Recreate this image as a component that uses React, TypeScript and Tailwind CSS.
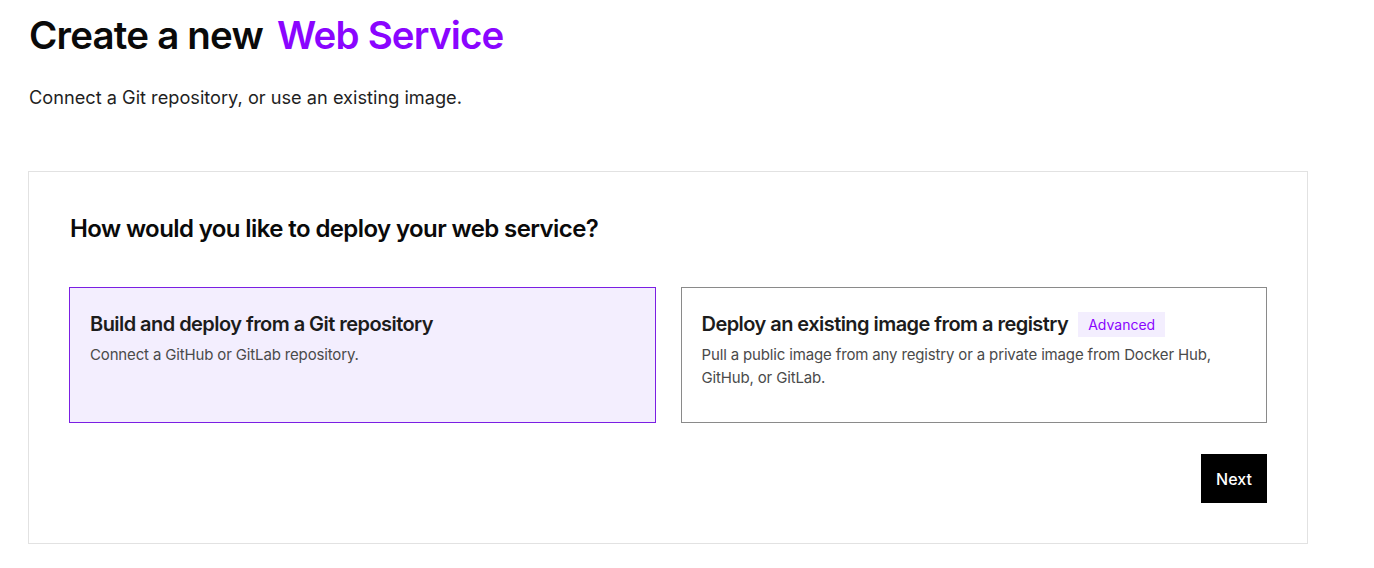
const Option = ({
  title,
  description,
  badge,
  selected,
}: {
  title: string;
  description: string;
  badge?: string;
  selected?: boolean;
}) => (
  <div
    className={
      "flex flex-col h-[136px] px-5 pt-[22px] border " +
      (selected ? "bg-[#f3eefe] border-[#7b1fe3]" : "bg-white border-[#8a8a8a]")
    }
  >
    <div className="flex flex-row items-center gap-[10px]">
      <h3 className="text-[20px] leading-[28px] font-semibold text-[#1c1c1c] tracking-[-0.55px]">
        {title}
      </h3>
      {badge && (
        <span className="px-[10px] py-[2px] bg-[#f3eefe] text-[#8a05ff] text-[14px] leading-[21px]">
          {badge}
        </span>
      )}
    </div>
    <p className="mt-[5px] text-[15px] leading-[23px] text-[#4a4a4a] tracking-[-0.15px]">
      {description}
    </p>
  </div>
);

export default function App() {
  return (
    <div
      className="min-h-screen bg-white pl-[28px] pt-[12px]"
      style={{ fontFamily: "Inter, 'Noto Sans', sans-serif" }}
    >
      <div className="w-[1280px]">
        <h1 className="flex flex-row gap-[14px] text-[38.5px] leading-[46px] font-semibold tracking-[-0.8px] text-[#0a0a0a] pl-[1px]">
          <span>Create a new</span>
          <span className="text-[#8a05ff]">Web Service</span>
        </h1>
        <p className="mt-[27px] pl-[1px] text-[18.2px] leading-[24px] text-[#1f1f1f]">
          Connect a Git repository, or use an existing image.
        </p>

        <div className="mt-[62px] border border-[#e2e2e2] p-10">
          <h2 className="text-[24px] leading-[34px] font-semibold text-[#0a0a0a] tracking-[-0.6px] pl-[1px]">
            How would you like to deploy your web service?
          </h2>
          <div className="mt-[41px] grid grid-cols-2 gap-[25px]">
            <Option
              selected
              title="Build and deploy from a Git repository"
              description="Connect a GitHub or GitLab repository."
            />
            <Option
              title="Deploy an existing image from a registry"
              badge="Advanced"
              description="Pull a public image from any registry or a private image from Docker Hub, GitHub, or GitLab."
            />
          </div>
          <div className="flex flex-row justify-end mt-[31px]">
            <button className="h-[49px] w-[66px] bg-black text-white text-[16px] font-medium">
              Next
            </button>
          </div>
        </div>
      </div>
    </div>
  );
}
